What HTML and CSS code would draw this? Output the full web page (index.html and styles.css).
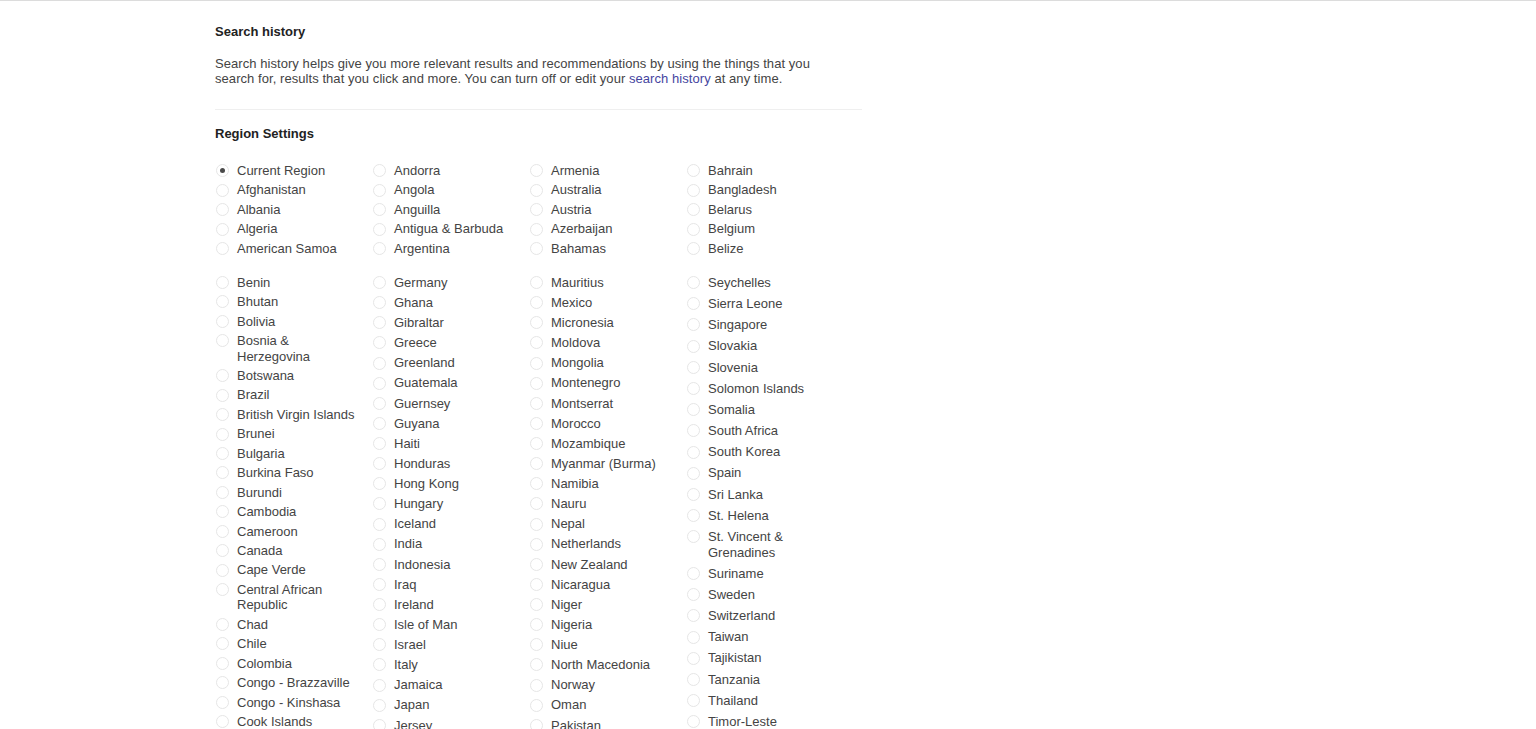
FILE: index.html
```html
<!DOCTYPE html>
<html lang="en">
<head>
<meta charset="utf-8">
<title>Settings</title>
<link rel="stylesheet" href="styles.css">
</head>
<body>
<div class="topline"></div>
<main class="page">
  <section class="section">
    <h2 class="title">Search history</h2>
    <p class="desc">Search history helps give you more relevant results and recommendations by using the things that you search for, results that you click and more. You can turn off or edit your <a class="link" href="#">search history</a> at any time.</p>
  </section>
  <hr class="sep">
  <section class="section">
    <h2 class="title">Region Settings</h2>
    <div class="grid first">
      <ul class="col">
        <li class="opt"><span class="radio on"></span><span class="lbl">Current Region</span></li>
        <li class="opt"><span class="radio"></span><span class="lbl">Afghanistan</span></li>
        <li class="opt"><span class="radio"></span><span class="lbl">Albania</span></li>
        <li class="opt"><span class="radio"></span><span class="lbl">Algeria</span></li>
        <li class="opt"><span class="radio"></span><span class="lbl">American Samoa</span></li>
      </ul>
      <ul class="col">
        <li class="opt"><span class="radio"></span><span class="lbl">Andorra</span></li>
        <li class="opt"><span class="radio"></span><span class="lbl">Angola</span></li>
        <li class="opt"><span class="radio"></span><span class="lbl">Anguilla</span></li>
        <li class="opt"><span class="radio"></span><span class="lbl">Antigua &amp; Barbuda</span></li>
        <li class="opt"><span class="radio"></span><span class="lbl">Argentina</span></li>
      </ul>
      <ul class="col">
        <li class="opt"><span class="radio"></span><span class="lbl">Armenia</span></li>
        <li class="opt"><span class="radio"></span><span class="lbl">Australia</span></li>
        <li class="opt"><span class="radio"></span><span class="lbl">Austria</span></li>
        <li class="opt"><span class="radio"></span><span class="lbl">Azerbaijan</span></li>
        <li class="opt"><span class="radio"></span><span class="lbl">Bahamas</span></li>
      </ul>
      <ul class="col">
        <li class="opt"><span class="radio"></span><span class="lbl">Bahrain</span></li>
        <li class="opt"><span class="radio"></span><span class="lbl">Bangladesh</span></li>
        <li class="opt"><span class="radio"></span><span class="lbl">Belarus</span></li>
        <li class="opt"><span class="radio"></span><span class="lbl">Belgium</span></li>
        <li class="opt"><span class="radio"></span><span class="lbl">Belize</span></li>
      </ul>
    </div>
    <div class="grid second">
      <ul class="col">
        <li class="opt"><span class="radio"></span><span class="lbl">Benin</span></li>
        <li class="opt"><span class="radio"></span><span class="lbl">Bhutan</span></li>
        <li class="opt"><span class="radio"></span><span class="lbl">Bolivia</span></li>
        <li class="opt"><span class="radio"></span><span class="lbl">Bosnia &amp; Herzegovina</span></li>
        <li class="opt"><span class="radio"></span><span class="lbl">Botswana</span></li>
        <li class="opt"><span class="radio"></span><span class="lbl">Brazil</span></li>
        <li class="opt"><span class="radio"></span><span class="lbl">British Virgin Islands</span></li>
        <li class="opt"><span class="radio"></span><span class="lbl">Brunei</span></li>
        <li class="opt"><span class="radio"></span><span class="lbl">Bulgaria</span></li>
        <li class="opt"><span class="radio"></span><span class="lbl">Burkina Faso</span></li>
        <li class="opt"><span class="radio"></span><span class="lbl">Burundi</span></li>
        <li class="opt"><span class="radio"></span><span class="lbl">Cambodia</span></li>
        <li class="opt"><span class="radio"></span><span class="lbl">Cameroon</span></li>
        <li class="opt"><span class="radio"></span><span class="lbl">Canada</span></li>
        <li class="opt"><span class="radio"></span><span class="lbl">Cape Verde</span></li>
        <li class="opt"><span class="radio"></span><span class="lbl">Central African Republic</span></li>
        <li class="opt"><span class="radio"></span><span class="lbl">Chad</span></li>
        <li class="opt"><span class="radio"></span><span class="lbl">Chile</span></li>
        <li class="opt"><span class="radio"></span><span class="lbl">Colombia</span></li>
        <li class="opt"><span class="radio"></span><span class="lbl">Congo - Brazzaville</span></li>
        <li class="opt"><span class="radio"></span><span class="lbl">Congo - Kinshasa</span></li>
        <li class="opt"><span class="radio"></span><span class="lbl">Cook Islands</span></li>
        <li class="opt"><span class="radio"></span><span class="lbl">Costa Rica</span></li>
      </ul>
      <ul class="col mid">
        <li class="opt"><span class="radio"></span><span class="lbl">Germany</span></li>
        <li class="opt"><span class="radio"></span><span class="lbl">Ghana</span></li>
        <li class="opt"><span class="radio"></span><span class="lbl">Gibraltar</span></li>
        <li class="opt"><span class="radio"></span><span class="lbl">Greece</span></li>
        <li class="opt"><span class="radio"></span><span class="lbl">Greenland</span></li>
        <li class="opt"><span class="radio"></span><span class="lbl">Guatemala</span></li>
        <li class="opt"><span class="radio"></span><span class="lbl">Guernsey</span></li>
        <li class="opt"><span class="radio"></span><span class="lbl">Guyana</span></li>
        <li class="opt"><span class="radio"></span><span class="lbl">Haiti</span></li>
        <li class="opt"><span class="radio"></span><span class="lbl">Honduras</span></li>
        <li class="opt"><span class="radio"></span><span class="lbl">Hong Kong</span></li>
        <li class="opt"><span class="radio"></span><span class="lbl">Hungary</span></li>
        <li class="opt"><span class="radio"></span><span class="lbl">Iceland</span></li>
        <li class="opt"><span class="radio"></span><span class="lbl">India</span></li>
        <li class="opt"><span class="radio"></span><span class="lbl">Indonesia</span></li>
        <li class="opt"><span class="radio"></span><span class="lbl">Iraq</span></li>
        <li class="opt"><span class="radio"></span><span class="lbl">Ireland</span></li>
        <li class="opt"><span class="radio"></span><span class="lbl">Isle of Man</span></li>
        <li class="opt"><span class="radio"></span><span class="lbl">Israel</span></li>
        <li class="opt"><span class="radio"></span><span class="lbl">Italy</span></li>
        <li class="opt"><span class="radio"></span><span class="lbl">Jamaica</span></li>
        <li class="opt"><span class="radio"></span><span class="lbl">Japan</span></li>
        <li class="opt"><span class="radio"></span><span class="lbl">Jersey</span></li>
        <li class="opt"><span class="radio"></span><span class="lbl">Jordan</span></li>
      </ul>
      <ul class="col mid">
        <li class="opt"><span class="radio"></span><span class="lbl">Mauritius</span></li>
        <li class="opt"><span class="radio"></span><span class="lbl">Mexico</span></li>
        <li class="opt"><span class="radio"></span><span class="lbl">Micronesia</span></li>
        <li class="opt"><span class="radio"></span><span class="lbl">Moldova</span></li>
        <li class="opt"><span class="radio"></span><span class="lbl">Mongolia</span></li>
        <li class="opt"><span class="radio"></span><span class="lbl">Montenegro</span></li>
        <li class="opt"><span class="radio"></span><span class="lbl">Montserrat</span></li>
        <li class="opt"><span class="radio"></span><span class="lbl">Morocco</span></li>
        <li class="opt"><span class="radio"></span><span class="lbl">Mozambique</span></li>
        <li class="opt"><span class="radio"></span><span class="lbl">Myanmar (Burma)</span></li>
        <li class="opt"><span class="radio"></span><span class="lbl">Namibia</span></li>
        <li class="opt"><span class="radio"></span><span class="lbl">Nauru</span></li>
        <li class="opt"><span class="radio"></span><span class="lbl">Nepal</span></li>
        <li class="opt"><span class="radio"></span><span class="lbl">Netherlands</span></li>
        <li class="opt"><span class="radio"></span><span class="lbl">New Zealand</span></li>
        <li class="opt"><span class="radio"></span><span class="lbl">Nicaragua</span></li>
        <li class="opt"><span class="radio"></span><span class="lbl">Niger</span></li>
        <li class="opt"><span class="radio"></span><span class="lbl">Nigeria</span></li>
        <li class="opt"><span class="radio"></span><span class="lbl">Niue</span></li>
        <li class="opt"><span class="radio"></span><span class="lbl">North Macedonia</span></li>
        <li class="opt"><span class="radio"></span><span class="lbl">Norway</span></li>
        <li class="opt"><span class="radio"></span><span class="lbl">Oman</span></li>
        <li class="opt"><span class="radio"></span><span class="lbl">Pakistan</span></li>
        <li class="opt"><span class="radio"></span><span class="lbl">Palau</span></li>
      </ul>
      <ul class="col wide">
        <li class="opt"><span class="radio"></span><span class="lbl">Seychelles</span></li>
        <li class="opt"><span class="radio"></span><span class="lbl">Sierra Leone</span></li>
        <li class="opt"><span class="radio"></span><span class="lbl">Singapore</span></li>
        <li class="opt"><span class="radio"></span><span class="lbl">Slovakia</span></li>
        <li class="opt"><span class="radio"></span><span class="lbl">Slovenia</span></li>
        <li class="opt"><span class="radio"></span><span class="lbl">Solomon Islands</span></li>
        <li class="opt"><span class="radio"></span><span class="lbl">Somalia</span></li>
        <li class="opt"><span class="radio"></span><span class="lbl">South Africa</span></li>
        <li class="opt"><span class="radio"></span><span class="lbl">South Korea</span></li>
        <li class="opt"><span class="radio"></span><span class="lbl">Spain</span></li>
        <li class="opt"><span class="radio"></span><span class="lbl">Sri Lanka</span></li>
        <li class="opt"><span class="radio"></span><span class="lbl">St. Helena</span></li>
        <li class="opt"><span class="radio"></span><span class="lbl">St. Vincent &amp; Grenadines</span></li>
        <li class="opt"><span class="radio"></span><span class="lbl">Suriname</span></li>
        <li class="opt"><span class="radio"></span><span class="lbl">Sweden</span></li>
        <li class="opt"><span class="radio"></span><span class="lbl">Switzerland</span></li>
        <li class="opt"><span class="radio"></span><span class="lbl">Taiwan</span></li>
        <li class="opt"><span class="radio"></span><span class="lbl">Tajikistan</span></li>
        <li class="opt"><span class="radio"></span><span class="lbl">Tanzania</span></li>
        <li class="opt"><span class="radio"></span><span class="lbl">Thailand</span></li>
        <li class="opt"><span class="radio"></span><span class="lbl">Timor-Leste</span></li>
        <li class="opt"><span class="radio"></span><span class="lbl">Togo</span></li>
      </ul>
    </div>
  </section>
</main>
</body>
</html>
```

FILE: styles.css
```css
* { box-sizing: border-box; }

html, body {
  margin: 0;
  padding: 0;
  background: #fff;
}

body {
  font-family: "Liberation Sans", Arial, sans-serif;
  font-size: 13px;
  color: #444;
}

.topline {
  height: 1px;
  background: #dcdcdc;
}

.page {
  margin-left: 215px;
  width: 647px;
  padding-top: 23px;
}

.title {
  margin: 0;
  font-size: 13px;
  line-height: 16px;
  font-weight: bold;
  color: #222;
}

.desc {
  margin: 16px 0 0;
  line-height: 15px;
  width: 620px;
  letter-spacing: 0.06px;
}

.link {
  color: #4545a0;
  text-decoration: none;
}

.sep {
  margin: 23px 0 0;
  border: 0;
  height: 1px;
  background: #efefef;
}

.section + .sep + .section .title {
  margin-top: 16px;
}

.grid {
  display: grid;
  grid-template-columns: repeat(4, 157px);
  align-items: start;
}

.grid.first {
  margin-top: 21px;
}

.grid.second {
  margin-top: 18.5px;
}

.col {
  list-style: none;
  margin: 0;
  padding: 0;
  display: flex;
  flex-direction: column;
  gap: 3.95px;
}

.col.mid {
  gap: 4.64px;
}

.col.wide {
  gap: 5.7px;
}

.opt {
  display: flex;
  align-items: flex-start;
  line-height: 15.5px;
}

.radio {
  flex: none;
  width: 13px;
  height: 13px;
  margin: 1.25px 8px 0 1px;
  border: 1px solid #e6e6e6;
  border-radius: 50%;
  display: flex;
  align-items: center;
  justify-content: center;
}

.radio.on::after {
  content: "";
  width: 5px;
  height: 5px;
  border-radius: 50%;
  background: #4a4a4a;
}

.lbl {
  max-width: 122px;
  color: #444;
}
```
